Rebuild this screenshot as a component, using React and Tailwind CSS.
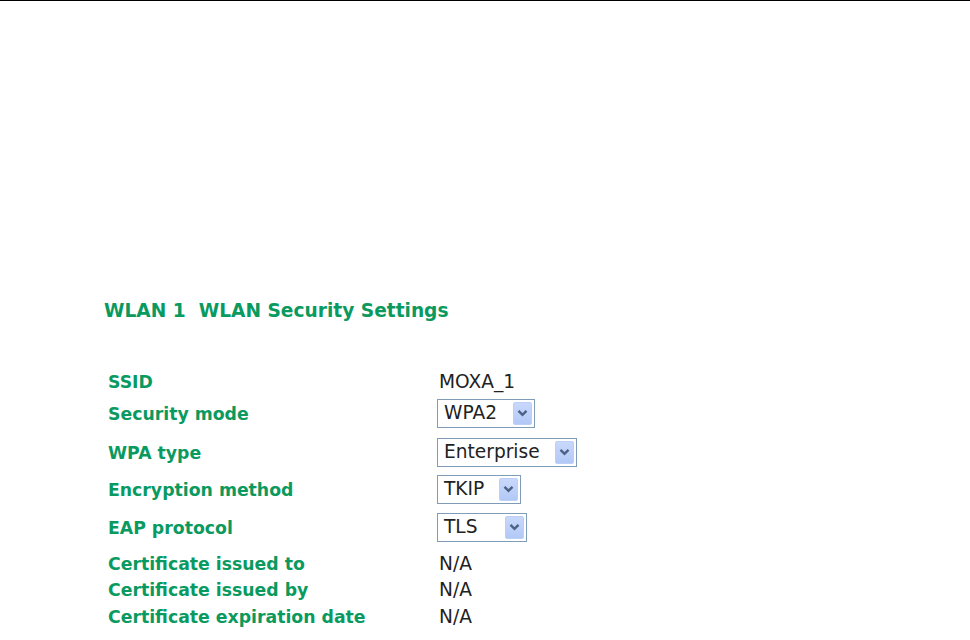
const rows = [
  { label: 'SSID', h: 'h-[30px]', value: 'MOXA_1' },
  { label: 'Security mode', h: 'h-[34px]', select: 'WPA2', w: 'w-[98px]' },
  { label: 'WPA type', h: 'h-[44px]', select: 'Enterprise', w: 'w-[140px]' },
  { label: 'Encryption method', h: 'h-[30px]', select: 'TKIP', w: 'w-[84px]' },
  { label: 'EAP protocol', h: 'h-[46px]', select: 'TLS', w: 'w-[90px]' },
  { label: 'Certificate issued to', h: 'h-[26px]', value: 'N/A' },
  { label: 'Certificate issued by', h: 'h-[26px]', value: 'N/A' },
  { label: 'Certificate expiration date', h: 'h-[28px]', value: 'N/A' },
];

function FakeSelect({ text, w }) {
  return (
    <div className={`${w} h-[29px] flex items-center justify-between border border-[#7f9db9] bg-white pl-[6px] pr-[2px]`}>
      <span className="leading-none">{text}</span>
      <span className="w-[19px] h-[23px] flex items-center justify-center rounded-[2px] bg-gradient-to-b from-[#c9d8fc] to-[#b2c9f6] border border-[#bccff6]">
        <svg width="11" height="8" viewBox="0 0 11 8">
          <path d="M1.5 1.8 L5.5 5.8 L9.5 1.8" fill="none" stroke="#4d6185" strokeWidth="2.4" />
        </svg>
      </span>
    </div>
  );
}

export default function App() {
  return (
    <div className="w-[970px] h-[640px] bg-white overflow-hidden font-['Verdana','DejaVu_Sans',sans-serif]">
      <div className="h-[1px] bg-black" />
      <div className="pl-[104px] pt-[298px]">
        <h1 className="text-[18.6px] font-bold text-[#0a9a60] leading-[24px] whitespace-pre">
          WLAN 1  WLAN Security Settings
        </h1>
      </div>
      <div className="pl-[108px] mt-[43px]">
        {rows.map((r) => (
          <div key={r.label} className={`${r.h} flex items-center`}>
            <div className="w-[329px] text-[17.3px] font-bold text-[#0a9a60] leading-none pt-[3px]">{r.label}</div>
            <div className="text-[18.6px] text-[#222] leading-none">
              {r.select ? <FakeSelect text={r.select} w={r.w} /> : <span className="pl-[2px] inline-block pt-[3px]">{r.value}</span>}
            </div>
          </div>
        ))}
      </div>
    </div>
  );
}
